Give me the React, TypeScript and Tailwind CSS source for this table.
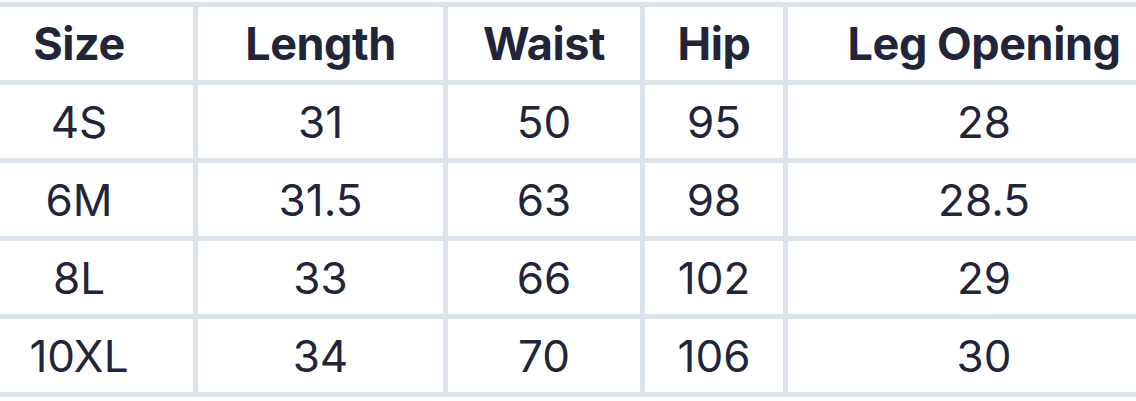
const headers = ["Size", "Length", "Waist", "Hip", "Leg Opening"];

const rows = [
  ["4S", "31", "50", "95", "28"],
  ["6M", "31.5", "63", "98", "28.5"],
  ["8L", "33", "66", "102", "29"],
  ["10XL", "34", "70", "106", "30"],
];

const colWidths = ["w-[233px]", "w-[250px]", "w-[197px]", "w-[143px]", "w-[397px]"];

export default function App() {
  return (
    <div className="h-[401px] w-[1136px] overflow-hidden bg-white pt-[2px] font-['Inter','Noto_Sans',sans-serif] text-[#22253a]">
      <table className="ml-[-40px] w-[1220px] min-w-[1220px] table-fixed border-collapse">
        <colgroup>
          {colWidths.map((w) => (
            <col key={w} className={w} />
          ))}
        </colgroup>
        <thead>
          <tr>
            {headers.map((h) => (
              <th
                key={h}
                className="h-[78px] border-[5px] border-[#dde3ea] p-0 text-center align-middle text-[45px] font-bold tracking-[-0.01em] whitespace-nowrap"
              >
                {h}
              </th>
            ))}
          </tr>
        </thead>
        <tbody>
          {rows.map((row) => (
            <tr key={row[0]}>
              {row.map((cell, i) => (
                <td
                  key={i}
                  className="h-[78px] border-[5px] border-[#dde3ea] p-0 text-center align-middle text-[44px] font-normal"
                >
                  {cell}
                </td>
              ))}
            </tr>
          ))}
        </tbody>
      </table>
    </div>
  );
}
